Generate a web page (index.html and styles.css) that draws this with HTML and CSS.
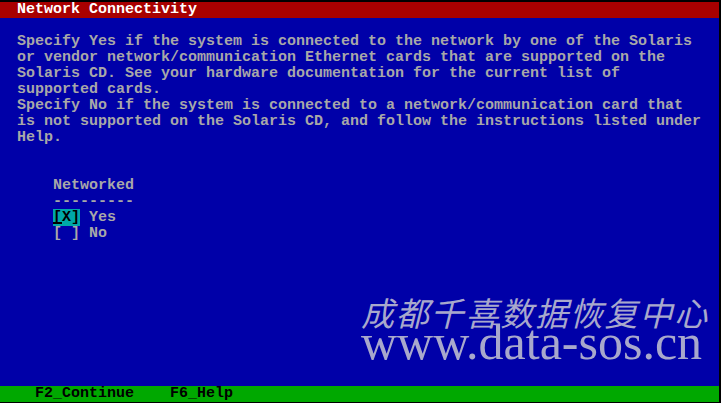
FILE: index.html
```html
<!DOCTYPE html>
<html>

<head>
    <title>Network Connectivity</title>
    <link rel="stylesheet" href="styles.css">
</head>

<body>
    <div class="screen">
        <div class="row title">  Network Connectivity</div>
        <div class="row"> </div>
        <div class="row">  Specify Yes if the system is connected to the network by one of the Solaris</div>
        <div class="row">  or vendor network/communication Ethernet cards that are supported on the</div>
        <div class="row">  Solaris CD. See your hardware documentation for the current list of</div>
        <div class="row">  supported cards.</div>
        <div class="row">  Specify No if the system is connected to a network/communication card that</div>
        <div class="row">  is not supported on the Solaris CD, and follow the instructions listed under</div>
        <div class="row">  Help.</div>
        <div class="row"> </div>
        <div class="row"> </div>
        <div class="row">      Networked</div>
        <div class="row">      ---------</div>
        <div class="row">      <span class="selected"><span class="cursor">[</span>X]</span> Yes</div>
        <div class="row">      [ ] No</div>
        <div class="filler"></div>
        <div class="row footer">    F2_Continue    F6_Help</div>

        <div class="watermark">
            <div class="wm-cn">成都千喜数据恢复中心</div>
            <div class="wm-url">www.data-sos.cn</div>
        </div>
    </div>
</body>

</html>
```

FILE: styles.css
```css
html, body {
    margin: 0;
    padding: 0;
    background-color: black;
}

body {
    width: 721px;
    height: 403px;
    overflow: hidden;
    padding-top: 2px;
    box-sizing: border-box;
}

.screen {
    position: relative;
    width: 720px;
    height: 400px;
    margin-left: -1px;
    background-color: #0000a8;
    display: flex;
    flex-direction: column;
    font-family: "Liberation Mono", "DejaVu Sans Mono", monospace;
    font-size: 15px;
    font-weight: bold;
    color: #a8a8a8;
}

.row {
    height: 16px;
    line-height: 16px;
    white-space: pre;
}

.title {
    background-color: #a80000;
    color: #ffffff;
}

.filler {
    flex: 1;
}

.footer {
    background-color: #00a800;
    color: #000000;
}

.selected {
    background-color: #00a8a8;
    color: #000000;
}

.cursor {
    display: inline-block;
    box-shadow: inset 0 -2px 0 #000000;
    height: 14px;
    line-height: 16px;
    vertical-align: top;
}

.watermark {
    position: absolute;
    left: 362px;
    top: 295px;
    color: #a8a8cc;
}

.wm-cn {
    font-family: "Noto Sans CJK SC", sans-serif;
    font-size: 33px;
    font-weight: normal;
    font-style: italic;
    letter-spacing: 1.8px;
    line-height: 30px;
}

.wm-url {
    font-family: "Liberation Serif", serif;
    font-size: 50px;
    font-weight: normal;
    line-height: 36px;
    margin-top: -3px;
}
```
